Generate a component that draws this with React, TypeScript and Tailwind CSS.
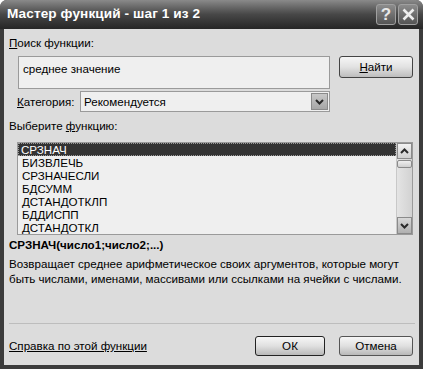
import React from "react";

const font = { fontFamily: '"Liberation Sans", Arial, sans-serif' };

function Chevron({ up }: { up?: boolean }) {
  return (
    <svg width="9" height="6" viewBox="0 0 9 6">
      <path
        d={up ? "M1 5 L4.5 1.5 L8 5" : "M1 1 L4.5 4.5 L8 1"}
        fill="none"
        stroke="#2a2a2a"
        strokeWidth="2"
      />
    </svg>
  );
}

const items = ["СРЗНАЧ", "БИЗВЛЕЧЬ", "СРЗНАЧЕСЛИ", "БДСУММ", "ДСТАНДОТКЛП", "БДДИСПП", "ДСТАНДОТКЛ"];

export default function App() {
  return (
    <div className="w-[423px] h-[369px] flex flex-col bg-[#3c3c3c] rounded-t-[7px] overflow-hidden text-[11.6px] text-black" style={font}>
      <div className="h-[29px] shrink-0 flex items-center justify-between pl-[7px] pr-[5px] bg-gradient-to-b from-[#8a8a8a] via-[#474747] to-[#262626]">
        <span className="text-white font-bold text-[13.6px] tracking-[0.1px]">Мастер функций - шаг 1 из 2</span>
        <div className="flex gap-[2px]">
          <div className="w-[20px] h-[21px] rounded-[3px] border border-[#a0a0a0] bg-gradient-to-b from-[#8c8c8c] to-[#555] flex items-center justify-center text-[#e8e8e8] font-bold text-[17px] leading-none">?</div>
          <div className="w-[20px] h-[21px] rounded-[3px] border border-[#a0a0a0] bg-gradient-to-b from-[#8c8c8c] to-[#555] flex items-center justify-center">
            <svg width="13" height="13" viewBox="0 0 13 13">
              <path d="M1.5 1.5 L11.5 11.5 M11.5 1.5 L1.5 11.5" stroke="#eeeeee" strokeWidth="2.6" />
            </svg>
          </div>
        </div>
      </div>
      <div className="flex-1 mx-[4px] mb-[4px] bg-[#dcdcdc] flex flex-col pl-[5px] pr-[6px]">
        <div className="mt-[7px] h-[14px] leading-[14px]"><span className="underline">П</span>оиск функции:</div>
        <div className="mt-[6px] flex items-start">
          <div className="ml-[9px] w-[312px] h-[33px] bg-[#efefef] border border-[#9a9a9a] pl-[4px] pt-[5px] leading-[14px]">среднее значение</div>
          <button className="ml-[9px] w-[74px] h-[22px] rounded-[3px] border border-[#444] bg-gradient-to-b from-[#f6f6f6] via-[#e2e2e2] to-[#bdbdbd] text-[11.6px] leading-none"><span className="underline">Н</span>айти</button>
        </div>
        <div className="mt-[2px] flex items-center h-[21px]">
          <div className="ml-[8px] w-[63px]"><span className="underline">К</span>атегория:</div>
          <div className="w-[250px] h-[21px] bg-[#efefef] border border-[#9a9a9a] flex items-center justify-between pl-[3px]">
            <span>Рекомендуется</span>
            <div className="w-[17px] h-[17px] mr-[1px] bg-gradient-to-b from-[#c8c8c8] to-[#a6a6a6] border border-[#8a8a8a] flex items-center justify-center"><Chevron /></div>
          </div>
        </div>
        <div className="mt-[7px] h-[14px] leading-[14px]">Выберите <span className="underline">ф</span>ункцию:</div>
        <div className="mt-[9px] ml-[8px] w-[396px] h-[93px] bg-[#efefef] border border-[#9a9a9a] flex">
          <div className="flex-1 flex flex-col">
            {items.map((it, i) => (
              <div key={it} className={i === 0 ? "h-[13px] leading-[13px] pl-[3px] bg-[#333] text-white outline-1 outline-dotted outline-[#999] -outline-offset-1" : "h-[13px] leading-[13px] pl-[4px]"}>{it}</div>
            ))}
          </div>
          <div className="w-[16px] flex flex-col justify-between bg-gradient-to-r from-[#e4e4e4] to-[#d2d2d2] border-l border-[#c8c8c8]">
            <div className="flex flex-col">
              <div className="h-[16px] border border-[#8a8a8a] bg-gradient-to-b from-[#f2f2f2] to-[#cfcfcf] flex items-center justify-center"><Chevron up /></div>
              <div className="h-[8px] mt-[1px] border border-[#8a8a8a] rounded-[2px] bg-gradient-to-b from-[#efefef] to-[#cfcfcf]" />
            </div>
            <div className="h-[17px] border border-[#8a8a8a] bg-gradient-to-b from-[#d8d8d8] to-[#b0b0b0] flex items-center justify-center"><Chevron /></div>
          </div>
        </div>
        <div className="mt-[3px] h-[14px] leading-[14px] font-bold">СРЗНАЧ(число1;число2;...)</div>
        <div className="mt-[4px] leading-[15px]">Возвращает среднее арифметическое своих аргументов, которые могут быть числами, именами, массивами или ссылками на ячейки с числами.</div>
        <div className="mt-auto h-px bg-[#bdbdbd] mr-[-2px]" />
        <div className="mt-[12px] mb-[9px] h-[20px] flex items-center">
          <span className="underline">Справка по этой функции</span>
          <button className="ml-auto w-[70px] h-[20px] rounded-[3px] border border-[#222] bg-gradient-to-b from-[#f6f6f6] via-[#e0e0e0] to-[#b8b8b8] text-[11.6px] leading-none">ОК</button>
          <button className="ml-[14px] w-[74px] h-[20px] rounded-[3px] border border-[#555] bg-gradient-to-b from-[#f6f6f6] via-[#e0e0e0] to-[#b8b8b8] text-[11.6px] leading-none">Отмена</button>
        </div>
      </div>
    </div>
  );
}
